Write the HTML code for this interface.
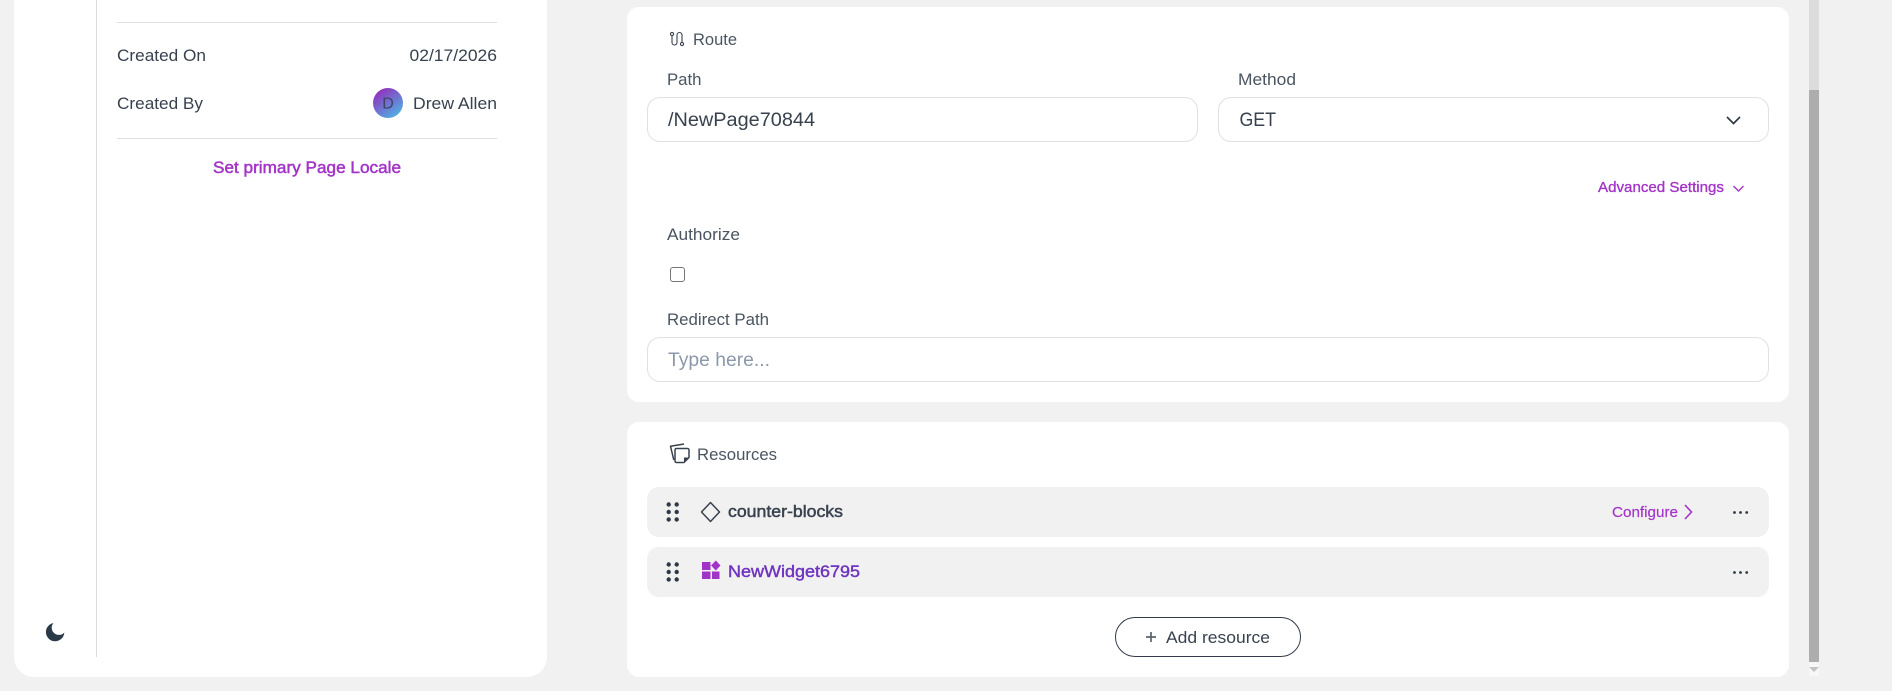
<!DOCTYPE html>
<html lang="en"><head><meta charset="utf-8"><title>Page</title>
<style>
html,body{margin:0;padding:0;width:1892px;height:691px;overflow:hidden;background:#f1f1f1}
.b{position:absolute;box-sizing:border-box}
svg{position:absolute;left:0;top:0}
text{font-family:"Liberation Sans",sans-serif}
.t{fill:#38424e;font-size:17px}
.l{fill:#4a5561;font-size:16.5px}
.p{fill:#a435c8}
</style></head><body>
<div class="b" style="left:14px;top:-30px;width:533px;height:707px;background:#fff;border-radius:20px"></div>
<div class="b" style="left:96px;top:0;width:1px;height:657px;background:#dcdcdc"></div>
<div class="b" style="left:117px;top:22px;width:380px;height:1px;background:#e0e0e0"></div>
<div class="b" style="left:117px;top:138px;width:380px;height:1px;background:#e0e0e0"></div>
<div class="b" style="left:373px;top:88px;width:30px;height:30px;border-radius:50%;background:linear-gradient(145deg,#8f35bf 15%,#4fb3e2 90%)"></div>

<div class="b" style="left:627px;top:7px;width:1162px;height:395px;background:#fff;border-radius:12px"></div>
<div class="b" style="left:647px;top:97px;width:551px;height:45px;background:#fff;border:1.2px solid #e1e1e1;border-radius:13px"></div>
<div class="b" style="left:1218px;top:97px;width:551px;height:45px;background:#fff;border:1.2px solid #e1e1e1;border-radius:13px"></div>
<div class="b" style="left:670px;top:267px;width:15px;height:15px;background:#fff;border:1.2px solid #767676;border-radius:3px"></div>
<div class="b" style="left:647px;top:337px;width:1122px;height:45px;background:#fff;border:1.2px solid #e1e1e1;border-radius:13px"></div>

<div class="b" style="left:627px;top:422px;width:1162px;height:255px;background:#fff;border-radius:12px"></div>
<div class="b" style="left:647px;top:487px;width:1122px;height:50px;background:#f1f1f1;border-radius:12px"></div>
<div class="b" style="left:647px;top:547px;width:1122px;height:50px;background:#f1f1f1;border-radius:12px"></div>
<div class="b" style="left:1115px;top:617px;width:186px;height:40px;background:#fff;border:1.2px solid #333c48;border-radius:20px"></div>

<div class="b" style="left:1809px;top:0;width:10px;height:90px;background:#dcdcdc"></div>
<div class="b" style="left:1809px;top:90px;width:10px;height:572px;background:#adadad"></div>
<div class="b" style="left:1809px;top:662px;width:10px;height:14px;background:#f7f7f7"></div>

<svg width="1892" height="691" viewBox="0 0 1892 691" xmlns="http://www.w3.org/2000/svg">
<text class="t" x="117" y="61" textLength="89" lengthAdjust="spacingAndGlyphs">Created On</text>
<text class="t" x="409.5" y="61" textLength="87.5" lengthAdjust="spacingAndGlyphs">02/17/2026</text>
<text class="t" x="117" y="109" textLength="86" lengthAdjust="spacingAndGlyphs">Created By</text>
<text x="388" y="108.500" text-anchor="middle" style="font-size:16px;fill:#3c4568">D</text>
<text class="t" x="413" y="109" textLength="84" lengthAdjust="spacingAndGlyphs">Drew Allen</text>
<text class="p" x="213" y="173" style="font-size:16.5px;stroke:#a435c8;stroke-width:.5px" textLength="188" lengthAdjust="spacingAndGlyphs">Set primary Page Locale</text>

<g fill="none" stroke="#38424e" stroke-width="1.1">
<circle cx="672" cy="34" r="1.6"/><circle cx="682" cy="44" r="1.6"/>
<path d="M672 35.600V42.500a2.500 2.500 0 0 0 5 0V35a2.500 2.500 0 0 1 5 0V42.400"/>
</g>
<text class="l" x="693" y="45" textLength="44" lengthAdjust="spacingAndGlyphs">Route</text>
<text class="l" x="667" y="85" textLength="34.500" lengthAdjust="spacingAndGlyphs">Path</text>
<text class="l" x="1238" y="85" textLength="58" lengthAdjust="spacingAndGlyphs">Method</text>
<text x="668" y="126" style="font-size:19px;fill:#38424e" textLength="147" lengthAdjust="spacingAndGlyphs">/NewPage70844</text>
<text x="1239.500" y="126" style="font-size:19px;fill:#38424e" textLength="36.500" lengthAdjust="spacingAndGlyphs">GET</text>
<path d="M1727 117l6.500 6.500 6.500-6.500" fill="none" stroke="#2f3a46" stroke-width="1.700"/>
<text class="p" x="1598" y="192" style="font-size:14.500px;stroke:#a435c8;stroke-width:.35px" textLength="126" lengthAdjust="spacingAndGlyphs">Advanced Settings</text>
<path d="M1733.500 186l5 5 5-5" fill="none" stroke="#a435c8" stroke-width="1.400"/>
<text class="l" x="667" y="240" textLength="73" lengthAdjust="spacingAndGlyphs">Authorize</text>
<text class="l" x="667" y="325" textLength="102" lengthAdjust="spacingAndGlyphs">Redirect Path</text>
<text x="668" y="366" style="font-size:19px;fill:#8c99ab" textLength="102" lengthAdjust="spacingAndGlyphs">Type here...</text>

<g fill="none" stroke="#38424e" stroke-width="1.500" stroke-linejoin="round">
<path d="M684 444l-13.500 2.200 3.300 13.800"/>
<path d="M676.500 448.500h11a1.500 1.500 0 0 1 1.500 1.500v7.500l-5 5h-7.500a1.500 1.500 0 0 1-1.500-1.500v-11a1.500 1.500 0 0 1 1.500-1.500z"/>
</g>
<path d="M684 462.500l5-5h-5z" fill="#38424e"/>
<text class="l" x="697" y="460" style="font-size:17px" textLength="80" lengthAdjust="spacingAndGlyphs">Resources</text>

<g fill="#2f3a46">
<circle cx="668.700" cy="504.500" r="2.200"/><circle cx="676.700" cy="504.500" r="2.200"/>
<circle cx="668.700" cy="512" r="2.200"/><circle cx="676.700" cy="512" r="2.200"/>
<circle cx="668.700" cy="519.500" r="2.200"/><circle cx="676.700" cy="519.500" r="2.200"/>
<circle cx="668.700" cy="564.500" r="2.200"/><circle cx="676.700" cy="564.500" r="2.200"/>
<circle cx="668.700" cy="572" r="2.200"/><circle cx="676.700" cy="572" r="2.200"/>
<circle cx="668.700" cy="579.500" r="2.200"/><circle cx="676.700" cy="579.500" r="2.200"/>
<circle cx="1734.500" cy="512.500" r="1.400"/><circle cx="1740.500" cy="512.500" r="1.400"/><circle cx="1746.700" cy="512.500" r="1.400"/>
<circle cx="1734.500" cy="572.500" r="1.400"/><circle cx="1740.500" cy="572.500" r="1.400"/><circle cx="1746.700" cy="572.500" r="1.400"/>
</g>
<path d="M710.500 502.500l9 9.500-9 9.500-9-9.500z" fill="none" stroke="#38424e" stroke-width="1.500" stroke-linejoin="round"/>
<text class="t" x="728" y="517" style="stroke:#38424e;stroke-width:.5px" textLength="115" lengthAdjust="spacingAndGlyphs">counter-blocks</text>
<g fill="#a033c8">
<rect x="702" y="562" width="8.500" height="8"/>
<rect x="702" y="571.500" width="8.500" height="7.500"/>
<rect x="712" y="571.500" width="7.500" height="7.500"/>
<path d="M715.800 560.500l4.700 5-4.700 5-4.700-5z"/>
</g>
<text x="728" y="577" style="font-size:17px;fill:#7035c0;stroke:#7035c0;stroke-width:.45px" textLength="132" lengthAdjust="spacingAndGlyphs">NewWidget6795</text>
<text class="p" x="1612" y="517" style="font-size:14.500px;stroke:#a435c8;stroke-width:.2px" textLength="66" lengthAdjust="spacingAndGlyphs">Configure</text>
<path d="M1685 505l6.500 7-6.500 7" fill="none" stroke="#a435c8" stroke-width="1.600"/>
<path d="M1146 637h10M1151 632v10" stroke="#5a6470" stroke-width="1.700" fill="none"/>
<text class="t" x="1166" y="643" textLength="104" lengthAdjust="spacingAndGlyphs">Add resource</text>
<path d="M53.500 623A9.200 9.200 0 1 0 64.300 632.500A6 6 0 0 1 53.500 623z" fill="#2a3a48"/>
<path d="M1809 667h10l-5 5z" fill="#c4c4c4"/>
</svg>
</body></html>
